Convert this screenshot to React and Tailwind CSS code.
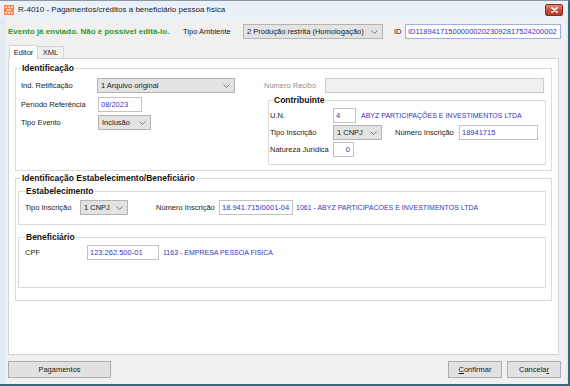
import React from "react";

const Chevron = () => (
  <svg width="7" height="4" viewBox="0 0 7 4" className="shrink-0">
    <polyline points="0.5,0.5 3.5,3.5 6.5,0.5" fill="none" stroke="#6b6b6b" strokeWidth="0.9" />
  </svg>
);

const Select = ({ w, children }) => (
  <div className={`${w} h-[15px] shrink-0 flex items-center justify-between pl-[3px] pr-[4px] bg-[#e3e3e3] border border-[#b4b4b4] text-[7.5px] text-[#1a1a1a] leading-none whitespace-nowrap overflow-hidden`}>
    <span>{children}</span>
    <Chevron />
  </div>
);

const Input = ({ w, children, blueBorder }) => (
  <div className={`${w} h-[15px] shrink-0 flex items-center pl-[2px] bg-white border ${blueBorder ? "border-[#9fb3d6]" : "border-[#c2c2c2]"} text-[7.5px] text-[#3535c2] leading-none whitespace-nowrap overflow-hidden`}>
    {children}
  </div>
);

const Label = ({ w, children, gray }) => (
  <span className={`${w} shrink-0 text-[7.5px] leading-none whitespace-nowrap ${gray ? "text-[#8f8f8f]" : "text-[#1a1a1a]"}`}>{children}</span>
);

const Blue = ({ children, cls = "" }) => (
  <span className={`text-[7px] leading-none whitespace-nowrap text-[#3535c2] ${cls}`}>{children}</span>
);

const Legend = ({ children, cls = "" }) => (
  <legend className={`px-[1px] text-[8.5px] leading-[10px] font-bold text-[#111] ${cls}`}>{children}</legend>
);

export default function App() {
  return (
    <div className="w-[570px] h-[386px] flex flex-col bg-[#e2eaf4] border-t border-[#8a97a6] border-r-2 border-r-[#2d6a87] border-b-2 border-b-[#2d6a87] font-['Liberation_Sans',Arial,sans-serif] overflow-hidden">
      {/* Title bar */}
      <div className="h-[18px] shrink-0 flex items-center pl-[4px] bg-[#e9f0f8]">
        <svg width="10" height="10" viewBox="0 0 10 10" className="shrink-0">
          <rect width="10" height="10" fill="#f3874d" />
          <rect x="1.5" y="1.5" width="1.5" height="1.5" fill="#fff" />
          <rect x="4.3" y="1.5" width="1.5" height="1.5" fill="#fff" />
          <rect x="7" y="1.5" width="1.5" height="1.5" fill="#fff" />
          <rect x="3" y="4.2" width="1.5" height="1.5" fill="#fff" />
          <rect x="5.6" y="4.2" width="1.5" height="1.5" fill="#fff" />
          <rect x="1.5" y="7" width="1.5" height="1.5" fill="#fff" />
          <rect x="4.3" y="7" width="1.5" height="1.5" fill="#fff" />
          <rect x="7" y="7" width="1.5" height="1.5" fill="#fff" />
        </svg>
        <span className="ml-[4px] text-[8px] leading-none text-[#1e1e1e] whitespace-nowrap">R-4010 - Pagamentos/créditos a beneficiário pessoa física</span>
        <div className="ml-auto mr-[5px] w-[18px] h-[12px] rounded-[2px] border border-[#8a2a20] bg-gradient-to-b from-[#e08a7c] via-[#c9503f] to-[#b53a28] flex items-center justify-center">
          <svg width="7" height="6" viewBox="0 0 7 6">
            <path d="M1 0.8 L6 5.2 M6 0.8 L1 5.2" stroke="#fff" strokeWidth="1.6" strokeLinecap="round" />
          </svg>
        </div>
      </div>

      {/* Body */}
      <div className="flex-1 flex flex-col ml-[6px] mr-[2px] bg-[#f0f0f0] pl-[2px] pr-[5px] pt-[4px]">
        {/* Row 1 */}
        <div className="h-[17px] flex items-center">
          <span className="w-[175px] shrink-0 text-[8px] font-bold leading-none text-[#2c9a2c] whitespace-nowrap">Evento já enviado. Não é possível editá-lo.</span>
          <Label w="w-[60px]">Tipo Ambiente</Label>
          <Select w="w-[140px]">2 Produção restrita (Homologação)</Select>
          <span className="ml-[11px] w-[11px] shrink-0 text-[7.5px] leading-none text-[#1a1a1a]">ID</span>
          <Input w="w-[156px]" blueBorder>ID1189417150000002023092817524200002</Input>
        </div>

        {/* Tabs */}
        <div className="mt-[4px] h-[14px] flex items-end pl-[1px] relative z-10">
          <div className="w-[29px] h-[14px] -mb-px bg-white border border-b-0 border-[#d4d4d4] flex items-center justify-center text-[7.5px] leading-none text-[#1a1a1a]">Editor</div>
          <div className="w-[26px] h-[12px] bg-[#f0f0f0] border border-l-0 border-b-0 border-[#d4d4d4] flex items-center justify-center text-[7.5px] leading-none text-[#1a1a1a]">XML</div>
        </div>

        {/* Panel */}
        <div className="w-[551px] h-[297px] bg-white border border-[#d4d4d4] pl-[6px] pt-[4px]">
          {/* Identificação */}
          <fieldset className="w-[537px] min-w-0 border border-[#dcdcdc] px-[5px] pb-[5px]">
            <Legend>Identificação</Legend>
            <div className="flex items-start">
              <div className="w-[243px] shrink-0 flex flex-col">
                <div className="mt-[5px] h-[15px] flex items-center">
                  <Label w="w-[76px]">Ind. Retificação</Label>
                  <Select w="w-[138px]">1 Arquivo original</Select>
                </div>
                <div className="mt-[4px] h-[15px] flex items-center">
                  <Label w="w-[77px]">Período Referência</Label>
                  <Input w="w-[44px]">08/2023</Input>
                </div>
                <div className="mt-[3px] h-[15px] flex items-center">
                  <Label w="w-[77px]">Tipo Evento</Label>
                  <Select w="w-[53px]">Inclusão</Select>
                </div>
              </div>
              <div className="flex-1 flex flex-col">
                <div className="mt-[5px] h-[15px] flex items-center">
                  <Label w="w-[61px]" gray>Número Recibo</Label>
                  <div className="w-[219px] h-[15px] bg-[#f0f0f0] border border-[#cccccc]" />
                </div>
                <fieldset className="mt-[2px] ml-[4px] w-[278px] min-w-0 border border-[#dcdcdc] pl-[1px] pb-[7px]">
                  <Legend cls="ml-[3px]">Contribuinte</Legend>
                  <div className="mt-[3px] h-[15px] flex items-center">
                    <Label w="w-[63px]">U.N.</Label>
                    <Input w="w-[23px]">4</Input>
                    <Blue cls="ml-[5px]">ABYZ PARTICIPAÇÕES E INVESTIMENTOS LTDA</Blue>
                  </div>
                  <div className="mt-[2px] h-[15px] flex items-center">
                    <Label w="w-[63px]">Tipo Inscrição</Label>
                    <Select w="w-[49px]">1 CNPJ</Select>
                    <Label w="w-[64px] ml-[13px]">Número Inscrição</Label>
                    <Input w="w-[79px]">18941715</Input>
                  </div>
                  <div className="mt-[2px] h-[15px] flex items-center">
                    <Label w="w-[63px]">Natureza Jurídica</Label>
                    <Input w="w-[21px]"><span className="w-full text-right pr-[3px]">0</span></Input>
                  </div>
                </fieldset>
              </div>
            </div>
          </fieldset>

          {/* Identificação Estabelecimento/Beneficiário */}
          <fieldset className="mt-[2px] w-[537px] min-w-0 border border-[#dcdcdc] pl-[2px] pr-[5px] pb-[12px]">
            <Legend cls="ml-[3px]">Identificação Estabelecimento/Beneficiário</Legend>
            <fieldset className="mt-[3px] min-w-0 border border-[#dcdcdc] pl-[6px] pb-[9px]">
              <Legend>Estabelecimento</Legend>
              <div className="mt-[4px] h-[15px] flex items-center">
                <Label w="w-[55px]">Tipo Inscrição</Label>
                <Select w="w-[48px]">1 CNPJ</Select>
                <Label w="w-[63px] ml-[28px]">Número Inscrição</Label>
                <Input w="w-[74px]">18.941.715/0001-04</Input>
                <Blue cls="ml-[3px]">1061 - ABYZ PARTICIPACOES E INVESTIMENTOS LTDA</Blue>
              </div>
            </fieldset>
            <fieldset className="mt-[7px] min-w-0 border border-[#dcdcdc] pl-[6px] pb-[27px]">
              <Legend>Beneficiário</Legend>
              <div className="mt-[3px] h-[15px] flex items-center">
                <Label w="w-[62px]">CPF</Label>
                <Input w="w-[72px]">123.262.500-01</Input>
                <Blue cls="ml-[4px]">1163 - EMPRESA PESSOA FISICA</Blue>
              </div>
            </fieldset>
          </fieldset>
        </div>

        {/* Buttons */}
        <div className="mt-[6px] h-[17px] flex items-center">
          <div className="w-[103px] h-[17px] bg-[#e1e1e1] border border-[#adadad] flex items-center justify-center text-[7.5px] leading-none text-[#1a1a1a]">Pagamentos</div>
          <div className="ml-auto w-[54px] h-[17px] bg-[#e1e1e1] border border-[#adadad] flex items-center justify-center text-[7.5px] leading-none text-[#1a1a1a]"><span><span className="underline">C</span>onfirmar</span></div>
          <div className="ml-[5px] w-[54px] h-[17px] bg-[#e1e1e1] border border-[#adadad] flex items-center justify-center text-[7.5px] leading-none text-[#1a1a1a]"><span>Cancela<span className="underline">r</span></span></div>
        </div>
      </div>
    </div>
  );
}
